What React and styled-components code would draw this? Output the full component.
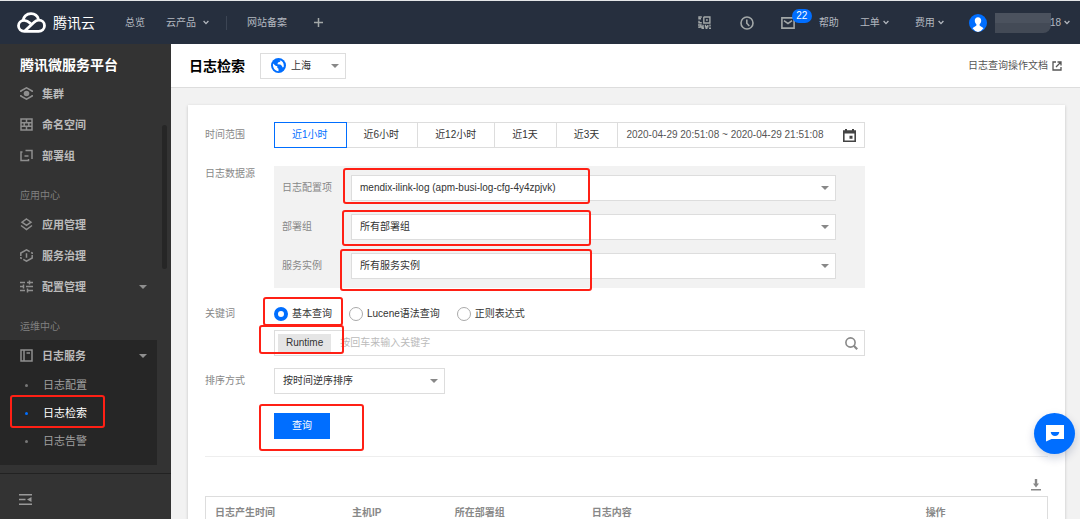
import React, {Component} from 'react'
import styled, {createGlobalStyle, css} from 'styled-components'

const ranges = ['近1小时', '近6小时', '近12小时', '近1天', '近3天']

const sources = [
  {
    id: 'config',
    label: '日志配置项',
    value: 'mendix-ilink-log (apm-busi-log-cfg-4y4zpjvk)',
    mark: {top: -8, left: -9, width: 247, height: 36},
  },
  {
    id: 'group',
    label: '部署组',
    value: '所有部署组',
    mark: {top: -5, left: -10, width: 249, height: 36},
  },
  {
    id: 'instance',
    label: '服务实例',
    value: '所有服务实例',
    mark: {top: -5, left: -12, width: 252, height: 42},
  },
]

const modes = ['基本查询', 'Lucene语法查询', '正则表达式']

const columns = [
  {title: '日志产生时间', width: '16.3%'},
  {title: '主机IP', width: '12.2%'},
  {title: '所在部署组', width: '16.3%'},
  {title: '日志内容', width: '39.7%'},
  {title: '操作', width: 'auto'},
]

const menu = [
  {
    items: [
      {name: '集群', icon: 'cluster'},
      {name: '命名空间', icon: 'namespace'},
      {name: '部署组', icon: 'deploy'},
    ],
  },
  {
    title: '应用中心',
    items: [
      {name: '应用管理', icon: 'layers'},
      {name: '服务治理', icon: 'govern'},
      {name: '配置管理', icon: 'config', arrow: true},
    ],
  },
]

const logMenu = ['日志配置', '日志检索', '日志告警']

const icons = {
  cluster: (
    <>
      <path d="M.8 5V4L6.500.8 12.200 4v1M.8 8v1l5.700 3.200L12.200 9V8" />
      <circle cx="6.5" cy="6.5" r="2.8" fill="currentColor" stroke="none" />
    </>
  ),
  namespace: (
    <path d="M1 1h11v11H1zM1 4.7h11M1 8.3h11M6.5 1v3.7M4.2 4.7v3.6M8.8 4.7v3.6M6.5 8.3V12" />
  ),
  deploy: <path d="M2.500 3H1v8.500h7.500V10M5.500 1.500H12V10M4.500 7h4" />,
  layers: <path d="M6.5 1 11 4.2 6.5 7.4 2 4.2zM1 7.5l5.5 4 5.5-4" />,
  govern: (
    <path d="M.8 7V4L6.5.8l3.2 1.8M12.2 6v3l-5.7 3.2L3.300 10.400M.8 8v1l1 .6M12.200 5V4l-1-.6M6.5 4.2v4.6" />
  ),
  config: (
    <path d="M0 2.5h5M7 2.5h6M9.5.5v4M0 6.5h3M3.5 4.5v4M6 6.5h7M0 10.5h5M7 10.5h6M7.5 8.5v4" />
  ),
  book: <path d="M1 1h11v11H1zM4 1v11M6.5 4H10" />,
}

const MenuIcon = ({name}) => (
  <Glyph width="13" height="13" viewBox="0 0 13 13" strokeWidth="1.5">
    {icons[name]}
  </Glyph>
)

const Chevron = () => (
  <Glyph width="6" height="5" viewBox="0 0 6 5" strokeWidth="1.3">
    <path d="M.6 1 3 3.6 5.4 1" />
  </Glyph>
)

const Logo = () => (
  <Glyph width="29" height="21" viewBox="0 0 29 21" strokeWidth="2.8">
    <path d="M6.3 9.2C6 4.6 9.6 1.6 14 1.6c3.8 0 6.6 2.4 7.4 5.6" />
    <path d="M13.6 11.6C11.8 9.8 9.8 8.4 7.2 8.4c-3.2 0-5.7 2.4-5.7 5.4 0 3.2 2.5 5.5 5.8 5.5h14.4c3.2 0 5.8-2.4 5.8-5.5 0-3.1-2.4-5.6-5.7-5.6-2 0-3.5.8-5 2.3L7.8 19" />
  </Glyph>
)

class App extends Component {
  state = {range: 0, mode: 0}

  render() {
    const {range, mode} = this.state
    return (
      <Page>
        <GlobalStyle />
        <TopBar>
          <Brand href="#">
            <Logo />
            腾讯云
          </Brand>
          <TopLink href="#" $space={30}>总览</TopLink>
          <TopLink href="#" $space={21}>
            云产品 <Chevron />
          </TopLink>
          <Separator />
          <TopLink href="#" $space={20}>网站备案</TopLink>
          <TopButton aria-label="添加" $space={27}>
            <Glyph width="9" height="9" viewBox="0 0 9 9" strokeWidth="1.5">
              <path d="M4.5 0v9M0 4.5h9" />
            </Glyph>
          </TopButton>
          <Spacer />
          <TopButton aria-label="扫码">
            <Glyph width="13" height="13" viewBox="0 0 13 13" strokeWidth="1.4">
              <path d="M5.6 1H6.3h5.6v6H5.8V1M8 4h1.8M3.8 1H1v1.8h2M1 4.8v2h2.8M0 9h3v1.5M5 8.7V11H1v1M3.5 12.3H6M7.5 8.8v2h2.3V9M12 8.6v2M7.5 12.3h2M11 12.3h2" />
            </Glyph>
          </TopButton>
          <TopButton aria-label="历史" $space={29}>
            <Glyph width="14" height="14" viewBox="0 0 14 14" strokeWidth="1.6">
              <circle cx="7" cy="7" r="6" />
              <path d="M6.8 3.4v3.9L9.3 10" />
            </Glyph>
          </TopButton>
          <TopButton aria-label="消息" $space={27}>
            <Glyph width="14" height="12" viewBox="0 0 14 12" strokeWidth="1.6">
              <path d="M.9.9h12.2v10.2H.9zM3 3.6l4 3 4-3" />
            </Glyph>
            <Badge>22</Badge>
          </TopButton>
          <TopLink href="#" $space={24}>帮助</TopLink>
          <TopLink href="#" $space={21} $tight>
            工单 <Chevron />
          </TopLink>
          <TopLink href="#" $space={26} $tight>
            费用 <Chevron />
          </TopLink>
          <User href="#">
            <svg width="18" height="18" viewBox="0 0 18 18">
              <circle cx="9" cy="9" r="9" fill="#006eff" />
              <path
                d="M9 3.2c-2 0-3.2 1.4-3.2 3.4 0 1.6.7 2.9 1.6 3.6v1.2c-.5.9-3 1.4-3.9 2.9A9 9 0 0 0 9 18a9 9 0 0 0 5.5-3.7c-.9-1.5-3.4-2-3.9-2.9v-1.2c.9-.7 1.6-2 1.6-3.6 0-2-1.2-3.4-3.2-3.4z"
                fill="#fff"
              />
            </svg>
            <Masked />
            <UserId>
              18 <Chevron />
            </UserId>
          </User>
        </TopBar>

        <Body>
          <Sidebar>
            <SidebarTitle>腾讯微服务平台</SidebarTitle>
            <Menu>
              {menu.map((section, i) => (
                <div key={i}>
                  {section.title && <SectionTitle>{section.title}</SectionTitle>}
                  {section.items.map(item => (
                    <MenuItem href="#" key={item.name}>
                      <MenuIcon name={item.icon} />
                      {item.name}
                      {item.arrow && <Caret />}
                    </MenuItem>
                  ))}
                </div>
              ))}
              <SectionTitle>运维中心</SectionTitle>
              <OpenGroup>
                <MenuItem href="#">
                  <MenuIcon name="book" />
                  日志服务
                  <Caret />
                </MenuItem>
                {logMenu.map((name, i) => (
                  <SubItem href="#" key={name} $active={i === 1}>
                    {name}
                    {i === 1 && <Mark $top={-4} $left={10} $width={95} $height={33} />}
                  </SubItem>
                ))}
              </OpenGroup>
              <ScrollThumb />
            </Menu>
            <SidebarFooter>
              <CollapseButton aria-label="收起菜单">
                <svg width="13" height="11" viewBox="0 0 13 11" fill="currentColor">
                  <path d="M0 0h13v1.6H0zM0 4.7h6.5v1.6H0zM0 9.4h13V11H0zM12.5 2.9v5.2L8 5.5z" />
                </svg>
              </CollapseButton>
            </SidebarFooter>
          </Sidebar>

          <Main>
            <PageHeader>
              <PageTitle>日志检索</PageTitle>
              <Region>
                <svg width="15" height="15" viewBox="0 0 15 15">
                  <circle cx="7.5" cy="7.5" r="7.5" fill="#006eff" />
                  <path
                    d="M2 5.5l2.6 2.3 1.7.4v1.6l1.2 1v2.4C4 13 1.5 10 2 5.5zM7.5 2l2.3.2-.8 1.6-2 .8-.6 1.7 2.9.3 1.5 1.2.9 1.6 1-.4C13.4 5 11 2 7.5 2z"
                    fill="#fff"
                  />
                </svg>
                <RegionSelect aria-label="地域">
                  <option>上海</option>
                </RegionSelect>
                <SelectCaret />
              </Region>
              <DocLink href="#">
                日志查询操作文档
                <Glyph width="10" height="10" viewBox="0 0 10 10" strokeWidth="1.3">
                  <path d="M4 1H1v8h8V6M5.5 1H9v3.5M9 1 4 6" />
                </Glyph>
              </DocLink>
            </PageHeader>

            <Card>
              <Row>
                <Label as="span">时间范围</Label>
                <Field>
                  <Ranges>
                    {ranges.map((name, i) => (
                      <RangeButton
                        key={name}
                        $active={i === range}
                        onClick={() => this.setState({range: i})}
                      >
                        {name}
                      </RangeButton>
                    ))}
                    <DateRange>
                      <DateInput
                        aria-label="自定义时间"
                        readOnly
                        value="2020-04-29 20:51:08 ~ 2020-04-29 21:51:08"
                      />
                      <svg width="13" height="13" viewBox="0 0 13 13" fill="#444">
                        <path
                          fillRule="evenodd"
                          d="M2 0h2v1.2h5V0h2v1.2h2V13H0V1.2h2zM1.6 4.6v6.8h9.8V4.6zM6.5 6.8h3v3h-3z"
                        />
                      </svg>
                    </DateRange>
                  </Ranges>
                </Field>
              </Row>

              <Row>
                <Label as="span" $short>日志数据源</Label>
                <Sources>
                  {sources.map(({id, label, value, mark}) => (
                    <SourceRow key={id}>
                      <Label htmlFor={id}>{label}</Label>
                      <SelectBox>
                        <Select id={id}>
                          <option>{value}</option>
                        </Select>
                        <SelectCaret />
                        <Mark
                          $top={mark.top}
                          $left={mark.left}
                          $width={mark.width}
                          $height={mark.height}
                        />
                      </SelectBox>
                    </SourceRow>
                  ))}
                </Sources>
              </Row>

              <Row $gap={12}>
                <Label htmlFor="keyword" $short>关键词</Label>
                <Field>
                  <Modes>
                    {modes.map((name, i) => (
                      <RadioLabel key={name}>
                        <Radio
                          type="radio"
                          name="mode"
                          checked={i === mode}
                          onChange={() => this.setState({mode: i})}
                        />
                        {name}
                      </RadioLabel>
                    ))}
                    <Mark $top={-9} $left={-11} $width={80} $height={29} />
                  </Modes>
                  <KeywordBox>
                    <Tag>Runtime</Tag>
                    <KeywordInput id="keyword" placeholder="按回车来输入关键字" />
                    <IconButton aria-label="搜索">
                      <Glyph width="13" height="13" viewBox="0 0 13 13" strokeWidth="1.6">
                        <circle cx="5.5" cy="5.5" r="4.6" />
                        <path d="m8.8 8.8 3.4 3.4" strokeWidth="2.2" />
                      </Glyph>
                    </IconButton>
                    <Mark $top={-6} $left={-16} $width={85} $height={29} />
                  </KeywordBox>
                </Field>
              </Row>

              <Row $gap={19}>
                <Label htmlFor="sort">排序方式</Label>
                <SortBox>
                  <Select id="sort">
                    <option>按时间逆序排序</option>
                  </Select>
                  <SelectCaret />
                </SortBox>
              </Row>

              <Actions>
                <SubmitBox>
                  <SubmitButton>查询</SubmitButton>
                  <Mark $top={-9} $left={-15} $width={105} $height={47} />
                </SubmitBox>
              </Actions>

              <Toolbar>
                <IconButton aria-label="下载">
                  <svg width="10" height="12" viewBox="0 0 10 12" fill="currentColor">
                    <path d="M3.8 0h2.4v4.5H8L5 8.5 2 4.5h1.8zM0 10h10v1.6H0z" />
                  </svg>
                </IconButton>
              </Toolbar>

              <Table>
                <thead>
                  <tr>
                    {columns.map(column => (
                      <HeadCell key={column.title} $width={column.width}>
                        {column.title}
                      </HeadCell>
                    ))}
                  </tr>
                </thead>
              </Table>
            </Card>
          </Main>
        </Body>

        <ChatButton aria-label="在线咨询">
          <svg width="18" height="17" viewBox="0 0 18 17">
            <path d="M0 0h18v14H5.5L0 16.6z" fill="#fff" />
            <path d="M4.7 7h8.6c-.4 2.6-2 4-4.3 4s-3.9-1.4-4.3-4z" fill="#006eff" />
          </svg>
        </ChatButton>
      </Page>
    )
  }
}

export default App

const GlobalStyle = createGlobalStyle`
  * {
    box-sizing: border-box;
  }

  body {
    margin: 0;
    background: #f2f2f2;
  }

  body, button, input, select {
    font-family: 'Liberation Sans', 'Noto Sans CJK SC', sans-serif;
    font-size: 10px;
    line-height: 16px;
  }

  button {
    border: 0;
    padding: 0;
    background: none;
    color: inherit;
    cursor: pointer;
  }

  a {
    color: inherit;
    text-decoration: none;
  }
`

const Page = styled.div`
  display: flex;
  flex-direction: column;
  height: 100vh;
`

const Glyph = styled.svg`
  display: block;
  flex: none;
  fill: none;
  stroke: currentColor;
`

// red frame laid over a control
const Mark = styled.span`
  position: absolute;
  z-index: 1;
  top: ${p => p.$top}px;
  left: ${p => p.$left}px;
  width: ${p => p.$width}px;
  height: ${p => p.$height}px;
  border: 2px solid #ff2015;
  border-radius: 3px;
  pointer-events: none;
`

const Caret = styled.span`
  margin-left: auto;
  border: 4px solid transparent;
  border-top-color: #8f8f8f;
  border-bottom: 0;
`

const TopBar = styled.header`
  display: flex;
  flex: none;
  align-items: center;
  height: 44px;
  padding: 0 10px 0 17px;
  border-top: 1px solid #e4e6e8;
  background: #262f3e;
  color: #b4b9c0;
`

const Brand = styled.a`
  display: flex;
  align-items: center;
  gap: 7px;
  color: #fff;
  font-size: 14px;
  line-height: 20px;
`

const TopLink = styled.a`
  display: flex;
  align-items: center;
  gap: ${p => (p.$tight ? 3 : 7)}px;
  margin-left: ${p => p.$space}px;
  white-space: nowrap;
`

const TopButton = styled.button`
  position: relative;
  margin-left: ${p => p.$space || 0}px;
  color: #a3a8a8;
`

const Separator = styled.span`
  width: 1px;
  height: 14px;
  margin-left: 17px;
  background: #3c4554;
`

const Spacer = styled.span`
  flex: 1;
`

const Badge = styled.span`
  position: absolute;
  top: -8px;
  left: 11px;
  width: 20px;
  border-radius: 7px;
  background: #006eff;
  color: #fff;
  line-height: 14px;
`

const User = styled.a`
  display: flex;
  align-items: center;
  margin-left: 25px;
`

const Masked = styled.span`
  width: 56px;
  height: 20px;
  margin-left: 8px;
  border-radius: 0 0 8px 0;
  background: linear-gradient(#4b525e 50%, #434a56 50%);
`

const UserId = styled.span`
  display: flex;
  align-items: center;
  gap: 3px;
  margin-left: -1px;
`

const Body = styled.div`
  display: flex;
  flex: 1;
  min-height: 0;
`

const Sidebar = styled.nav`
  display: flex;
  flex: none;
  flex-direction: column;
  width: 171px;
  background: #333;
`

const SidebarTitle = styled.h2`
  margin: 0;
  padding: 11px 20px 2px;
  color: #fff;
  font-size: 14px;
  line-height: 21px;
`

const Menu = styled.div`
  position: relative;
  flex: 1;
  min-height: 0;
  overflow: hidden;
`

const SectionTitle = styled.div`
  padding: 17px 20px 5px;
  color: #808080;
`

const MenuItem = styled.a`
  display: flex;
  align-items: center;
  gap: 9px;
  height: 31px;
  padding: 0 24px 0 20px;
  color: #bbb;
  font-size: 11px;
  font-weight: bold;

  ${Glyph} {
    color: #8f8f8f;
  }
`

const OpenGroup = styled.div`
  margin-right: 14px;
  padding-bottom: 10px;
  background: #262626;

  ${MenuItem} {
    padding-right: 10px;
  }
`

const SubItem = styled.a`
  position: relative;
  display: flex;
  align-items: center;
  height: 28px;
  padding-left: 25px;
  color: ${p => (p.$active ? '#fff' : '#a0a0a0')};
  font-size: 11px;

  &::before {
    content: '';
    width: 3px;
    height: 3px;
    margin-right: 15px;
    border-radius: 50%;
    background: ${p => (p.$active ? '#006eff' : '#777')};
  }
`

const ScrollThumb = styled.span`
  position: absolute;
  top: 47px;
  right: 4px;
  width: 5px;
  height: 144px;
  border-radius: 3px;
  background: #262626;
`

const SidebarFooter = styled.div`
  flex: none;
  display: flex;
  align-items: center;
  height: 46px;
  padding: 6px 19px 0;
  border-top: 1px solid #222;
`

const CollapseButton = styled.button`
  color: #999;

  svg {
    display: block;
  }
`

const Main = styled.main`
  display: flex;
  flex: 1;
  flex-direction: column;
  min-width: 0;
  overflow: auto;
  scrollbar-width: none;
`

const PageHeader = styled.div`
  display: flex;
  flex: none;
  align-items: center;
  height: 44px;
  padding: 0 18px;
  border-bottom: 1px solid #ddd;
  background: #fff;
`

const PageTitle = styled.h1`
  margin: 0;
  color: #000;
  font-size: 14px;
  line-height: 20px;
`

const selectReset = css`
  width: 100%;
  height: 100%;
  border: 0;
  outline: 0;
  appearance: none;
  background: transparent;
  color: #333;
`

const SelectCaret = styled.span`
  position: absolute;
  top: 10px;
  right: 6px;
  border: 4px solid transparent;
  border-top-color: #888;
  border-bottom: 0;
  pointer-events: none;
`

const SelectBox = styled.div`
  position: relative;
  flex: 1;
  height: 26px;
  border: 1px solid #ddd;
  background: #fff;
`

const Region = styled(SelectBox)`
  display: flex;
  flex: none;
  align-items: center;
  gap: 5px;
  width: 86px;
  margin-left: 15px;
  padding-left: 10px;

  svg {
    flex: none;
  }
`

const RegionSelect = styled.select`
  ${selectReset}
`

const DocLink = styled.a`
  display: flex;
  align-items: center;
  gap: 4px;
  margin-left: auto;
  color: #555;
`

const Card = styled.section`
  flex: none;
  margin: 17px 15px 0 17px;
  padding: 17px 17px 20px;
  background: #fff;
  box-shadow: 0 1px 3px rgba(0, 0, 0, 0.2);
`

const Row = styled.div`
  display: flex;
  max-width: 660px;
  margin-bottom: ${p => p.$gap || 18}px;
`

const Label = styled.label`
  flex: none;
  width: 69px;
  color: #888;
  line-height: ${p => (p.$short ? 16 : 26)}px;
`

const Field = styled.div`
  flex: 1;
`

const Ranges = styled.div`
  display: flex;
  height: 26px;
`

const RangeButton = styled.button`
  padding: 0 18px 0 17px;
  border: 1px solid #ddd;
  margin-right: -1px;
  color: #333;
  white-space: nowrap;

  ${p =>
    p.$active &&
    css`
      position: relative;
      border-color: #006eff;
      color: #006eff;
    `}
`

const DateRange = styled.div`
  display: flex;
  flex: 1;
  align-items: center;
  padding: 0 8px;
  border: 1px solid #ddd;
`

const DateInput = styled.input`
  flex: 1;
  min-width: 0;
  padding: 0;
  border: 0;
  outline: 0;
  color: #555;
`

const Sources = styled.div`
  display: flex;
  flex: 1;
  flex-direction: column;
  gap: 13px;
  padding: 9px 29px 9px 8px;
  background: #f2f2f2;
`

const SourceRow = styled.div`
  display: flex;
`

const Select = styled.select`
  ${selectReset}
  padding: 0 24px 0 8px;
`

const Modes = styled.div`
  position: relative;
  display: flex;
  gap: 17px;
  height: 15px;
  margin-bottom: 9px;
`

const RadioLabel = styled.label`
  display: flex;
  align-items: center;
  gap: 4px;
  color: #333;
`

const Radio = styled.input`
  width: 14px;
  height: 14px;
  margin: 0;
  border: 1px solid #aaa;
  border-radius: 50%;
  appearance: none;
  background: #fff;

  &:checked {
    border: 4px solid #006eff;
  }
`

const KeywordBox = styled.div`
  position: relative;
  display: flex;
  align-items: center;
  height: 26px;
  padding: 0 6px 0 3px;
  border: 1px solid #ddd;
`

const Tag = styled.span`
  padding: 1px 8px;
  background: #e5e5e5;
  color: #333;
`

const KeywordInput = styled.input`
  flex: 1;
  margin-left: 9px;
  padding: 0;
  border: 0;
  outline: 0;

  &::placeholder {
    color: #bbb;
  }
`

const IconButton = styled.button`
  color: #888;

  svg {
    display: block;
  }
`

const SortBox = styled(SelectBox)`
  flex: none;
  width: 171px;
`

const Actions = styled.div`
  padding: 0 0 17px 69px;
  border-bottom: 1px solid #eee;
`

const SubmitBox = styled.div`
  position: relative;
  width: 56px;
`

const SubmitButton = styled.button`
  display: block;
  width: 100%;
  height: 26px;
  background: #006eff;
  color: #fff;
`

const Toolbar = styled.div`
  display: flex;
  justify-content: flex-end;
  padding: 22px 7px 5px;
`

const Table = styled.table`
  width: 100%;
  border: 1px solid #ddd;
  border-spacing: 0;
  table-layout: fixed;
`

const HeadCell = styled.th`
  width: ${p => p.$width};
  padding: 8px 9px;
  color: #888;
  text-align: left;
`

const ChatButton = styled.button`
  position: fixed;
  right: 5px;
  bottom: 65px;
  display: flex;
  align-items: center;
  justify-content: center;
  width: 41px;
  height: 41px;
  border-radius: 50%;
  background: #006eff;
  box-shadow: 0 4px 10px rgba(0, 30, 90, 0.2);
`
